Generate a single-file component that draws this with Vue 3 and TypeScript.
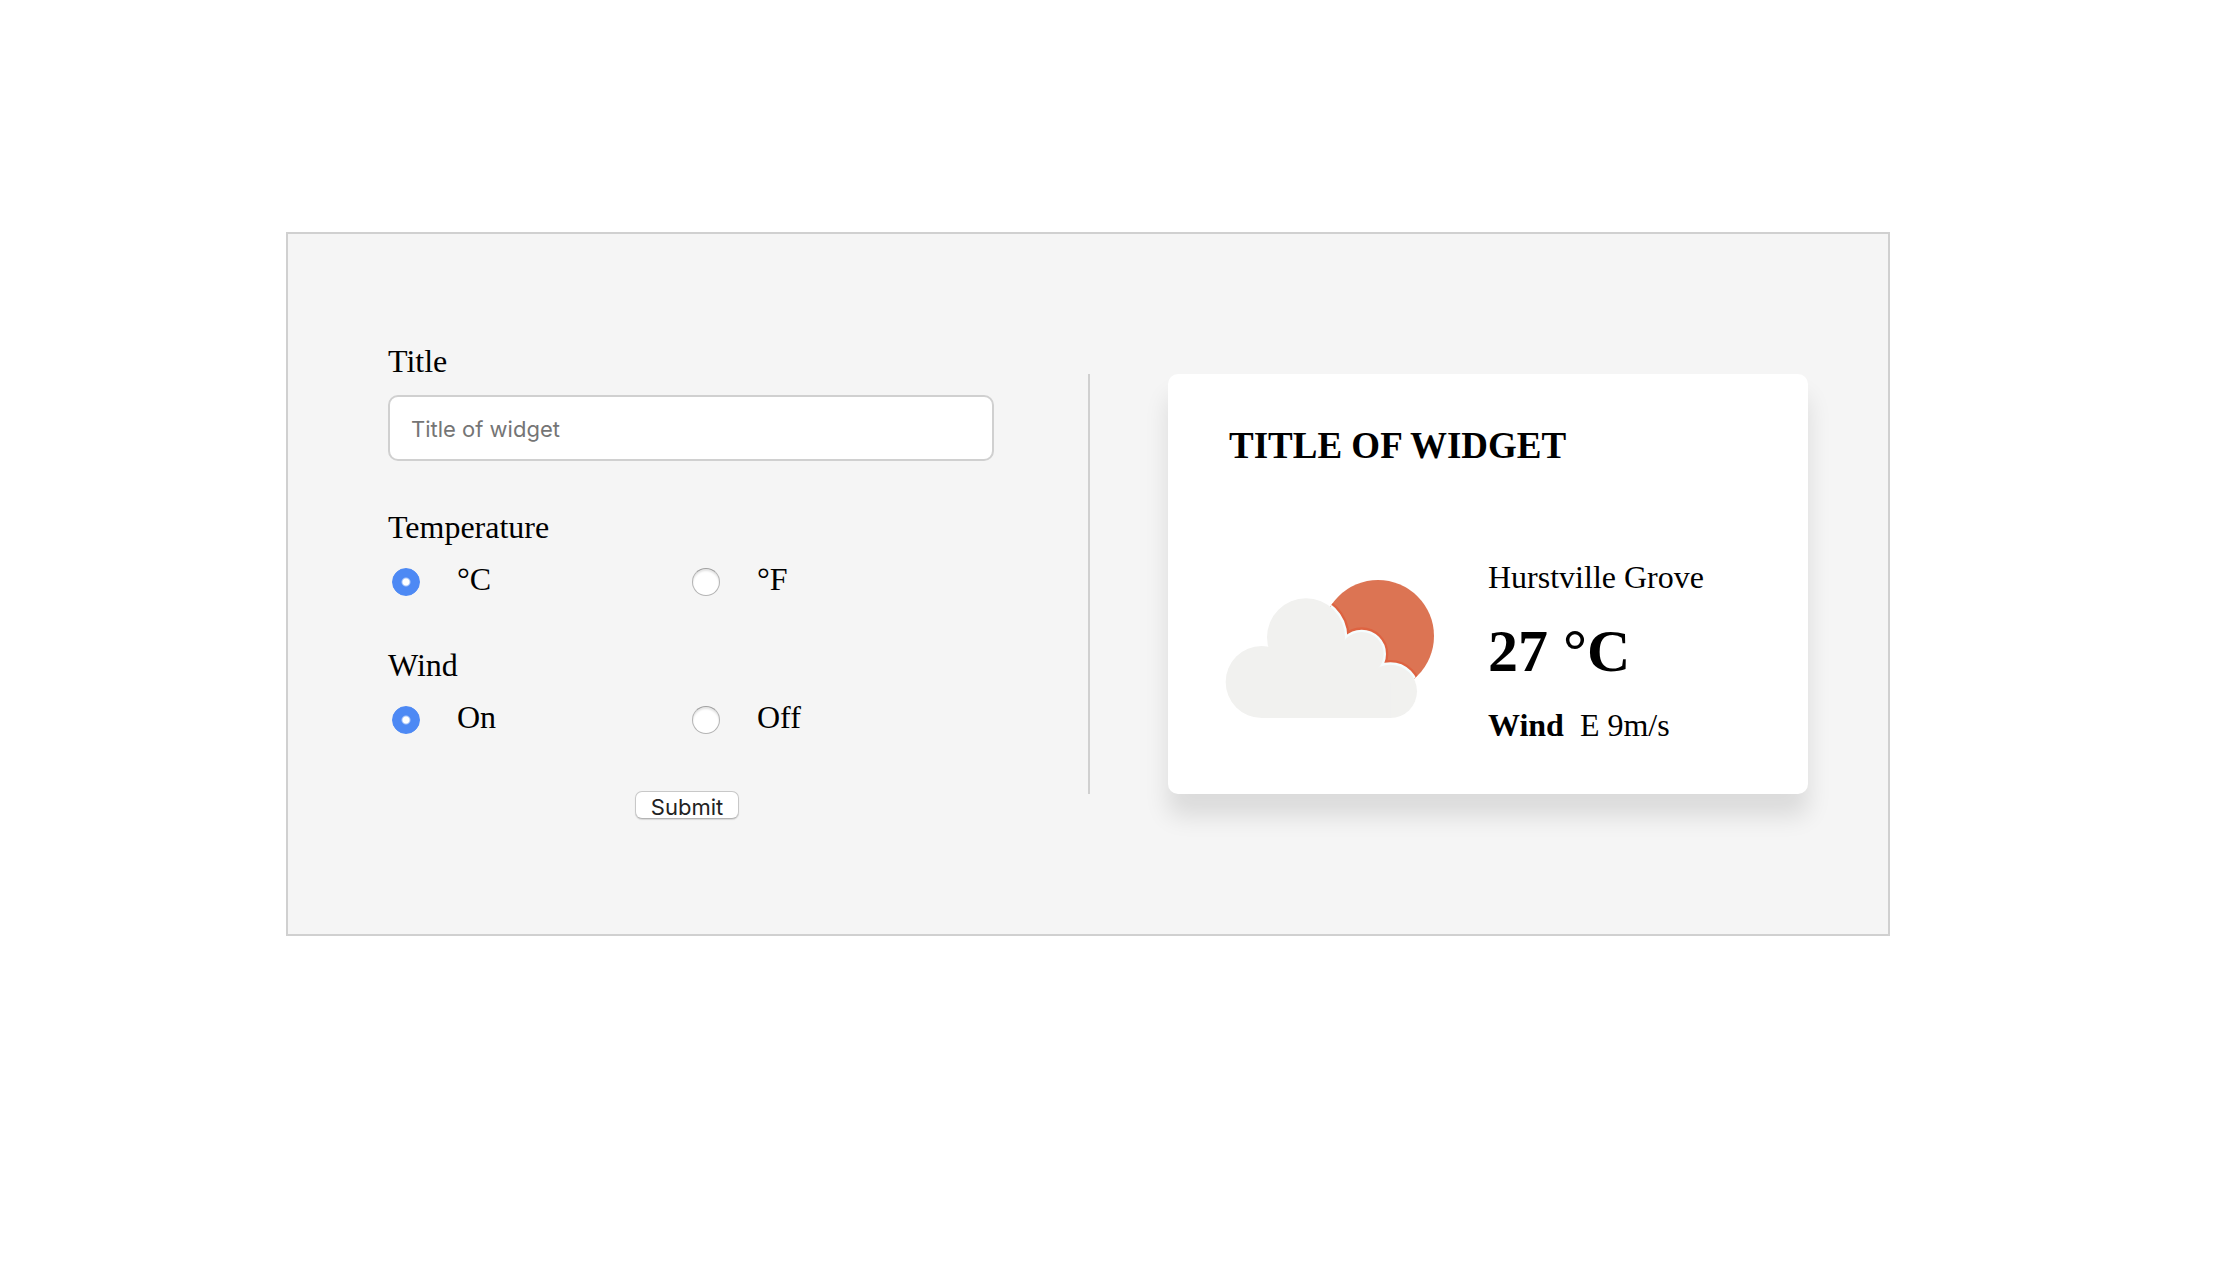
<script setup lang="ts">
import { computed, ref } from 'vue'

type Unit = 'C' | 'F'

const title = ref('')
const unit = ref<Unit>('C')
const wind = ref<'on' | 'off'>('on')

const celsius = 27
const heading = computed(() => title.value || 'Title of widget')
const temperature = computed(() =>
  unit.value === 'C' ? `${celsius} °C` : `${Math.round((celsius * 9) / 5 + 32)} °F`
)
</script>

<template>
  <main class="page">
    <section class="panel">
      <form class="form" @submit.prevent>
        <div class="field">
          <label class="label" for="widget-title">Title</label>
          <input id="widget-title" v-model="title" class="text-input" type="text" placeholder="Title of widget" />
        </div>

        <fieldset class="field">
          <legend class="label">Temperature</legend>
          <div class="options">
            <label class="option"><input v-model="unit" class="radio" type="radio" name="unit" value="C" />°C</label>
            <label class="option"><input v-model="unit" class="radio" type="radio" name="unit" value="F" />°F</label>
          </div>
        </fieldset>

        <fieldset class="field">
          <legend class="label">Wind</legend>
          <div class="options">
            <label class="option"><input v-model="wind" class="radio" type="radio" name="wind" value="on" />On</label>
            <label class="option"><input v-model="wind" class="radio" type="radio" name="wind" value="off" />Off</label>
          </div>
        </fieldset>

        <div class="actions">
          <button class="submit" type="submit">Submit</button>
        </div>
      </form>

      <div class="preview">
        <article class="card">
          <h3 class="card-title">{{ heading }}</h3>
          <div class="weather">
            <svg class="icon" viewBox="72 84 636 438" role="img" aria-label="Partly cloudy">
              <defs>
                <clipPath id="sun-clip"><circle cx="534" cy="258" r="168" /></clipPath>
                <g id="cloud">
                  <circle cx="185" cy="396" r="108" />
                  <circle cx="318" cy="262" r="117" />
                  <circle cx="485" cy="312" r="66" />
                  <circle cx="571" cy="424" r="80" />
                  <path d="M185 300H320L485 300L571 400V504H185Z" />
                </g>
              </defs>
              <circle cx="534" cy="258" r="168" fill="#dc7453" />
              <g clip-path="url(#sun-clip)">
                <use href="#cloud" fill="#de6341" stroke="#de6341" stroke-width="28" />
                <use href="#cloud" fill="#f5fdfe" stroke="#f5fdfe" stroke-width="14" />
              </g>
              <use href="#cloud" fill="#f1f1ef" />
            </svg>
            <div class="details">
              <p>Hurstville Grove</p>
              <p class="degrees">{{ temperature }}</p>
              <p v-if="wind === 'on'" class="wind"><b>Wind</b><span>E 9m/s</span></p>
            </div>
          </div>
        </article>
      </div>
    </section>
  </main>
</template>

<style>
body {
  margin: 0;
  background: #fff;
}
</style>

<style scoped>
.page {
  padding: 232px 346px 232px 286px;
  color: #000;
  font-family: "Liberation Serif", "Times New Roman", serif;
  font-size: 32px;
  line-height: 36px;
}

.panel {
  display: grid;
  grid-template-columns: minmax(0, 700fr) minmax(0, 720fr);
  align-items: center;
  padding: 109px 80px 109px 100px;
  border: 2px solid #d0d0d0;
  background: #f5f5f5;
}

.form {
  margin-right: 94px;
  padding-bottom: 6px;
}

.field {
  min-width: 0;
  margin: 0 0 48px;
  padding: 0;
  border: 0;
}

.label {
  display: block;
  margin-bottom: 16px;
  padding: 0;
}

.text-input {
  display: block;
  box-sizing: border-box;
  width: 100%;
  height: 66px;
  padding: 2px 21px 0;
  border: 2px solid #d0d0d0;
  border-radius: 10px;
  background: #fff;
  font-family: Inter, sans-serif;
  font-size: 22px;
}

.text-input::placeholder {
  color: #757575;
  opacity: 1;
}

.options {
  display: grid;
  grid-template-columns: 1fr 1fr;
  padding: 0 6px 2px 0;
}

.option {
  display: flex;
  align-items: flex-start;
}

.radio {
  appearance: none;
  width: 28px;
  height: 28px;
  margin: 7px 37px 0 4px;
  border: 1px solid #b4b4b4;
  border-top-color: #a0a0a0;
  border-radius: 50%;
  background: #fff;
  box-shadow: inset 0 2px 2px #e4e4e4;
}

.radio:checked {
  border-color: #4d89f4;
  background: radial-gradient(circle, #fff 3px, #4d89f4 5px);
  box-shadow: none;
}

.actions {
  display: flex;
  justify-content: center;
  margin-top: 54px;
  padding-right: 8px;
}

.submit {
  width: 104px;
  height: 28px;
  padding: 4px 0 0;
  border: 1px solid #c8c8c8;
  border-bottom-color: #b4b4b4;
  border-radius: 7px;
  background: #fff;
  box-shadow: 0 1px 1px #d8d8d8;
  color: #222;
  font-family: Inter, sans-serif;
  font-size: 22px;
  line-height: 22px;
}

.preview {
  padding-left: 78px;
  border-left: 2px solid #d0d0d0;
}

.card {
  padding: 51px 56px;
  border-radius: 10px;
  background: #fff;
  box-shadow: 0 22px 24px rgba(0, 0, 0, 0.11);
}

.card-title {
  margin: 0 0 92px;
  padding-left: 5px;
  font-size: 37px;
  line-height: 42px;
  text-transform: uppercase;
}

.weather {
  display: flex;
  align-items: center;
  gap: 52px;
}

.icon {
  flex: none;
  width: 212px;
}

.details p {
  margin: 0;
}

.details .degrees {
  margin: 22px 0;
  font-size: 60px;
  font-weight: bold;
  line-height: 68px;
}

.wind {
  display: flex;
  gap: 16px;
}
</style>
